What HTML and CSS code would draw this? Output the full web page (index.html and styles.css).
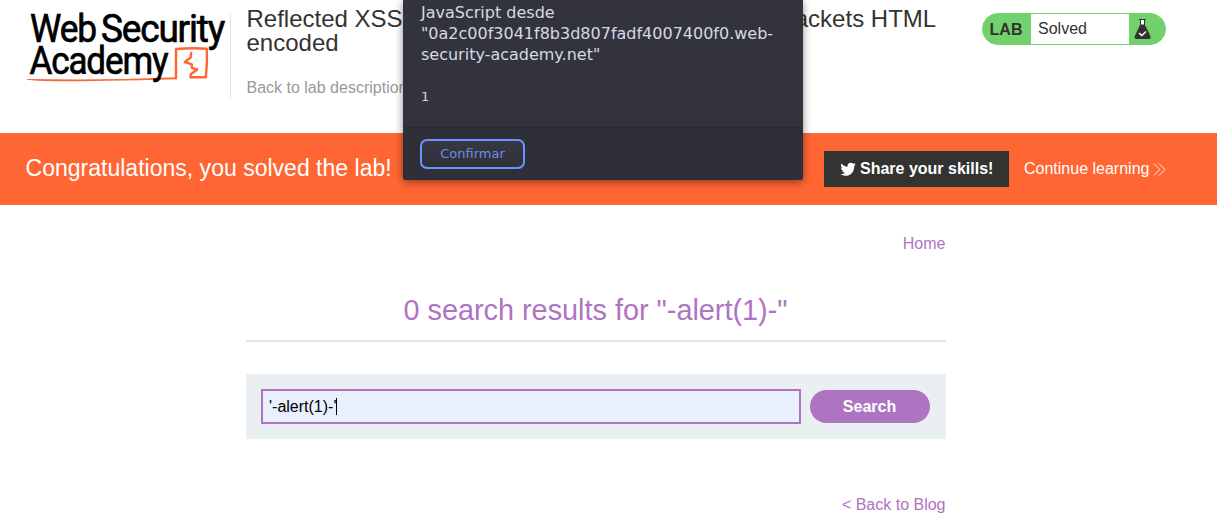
FILE: index.html
```html
<!DOCTYPE html>
<html lang="en">
<head>
<meta charset="utf-8">
<title>Web Security Academy</title>
<link rel="stylesheet" href="styles.css">
</head>
<body>
<header class="header">
  <svg class="logo" width="206" height="90" viewBox="24 0 206 90" role="img" aria-label="Web Security Academy">
    <path class="logo-line" d="M176 78.300V49Q191 47.700 206.800 48.700Q207.500 63 205.800 77.300L190.500 77.300 190.800 74.300 197.300 69.500 191.800 67.800 191.800 64.300 184.800 62 190.500 57.800 191.200 53"/>
    <path fill="#ff6633" d="M26.500 79Q100 80.500 176.500 77.300V79.200Q90 81.500 55 81.300Q35 81 27 79.800Z"/>
    <g class="logo-text">
      <text x="30" y="41.500" textLength="66" lengthAdjust="spacingAndGlyphs">Web</text>
      <text x="101" y="41.500" textLength="123" lengthAdjust="spacingAndGlyphs">Security</text>
      <text x="29.500" y="74" textLength="138" lengthAdjust="spacingAndGlyphs">Academy</text>
    </g>
  </svg>
  <div class="title">
    <h1>Reflected XSS into a JavaScript string with angle brackets HTML encoded</h1>
    <a class="back">Back to lab description</a>
  </div>
  <div class="status">
    <b class="status-label">LAB</b>
    <span class="status-value">Solved</span>
    <span class="status-icon">
      <svg width="18" height="20" viewBox="0 0 18 20"><path fill="#fff" d="M6.500 1h4v5h-4z"/><path fill="#333332" d="M5 0h7v1h-1v5l5.300 10.800Q17 20 15.500 20h-13Q0 20 .7 17.300L6 6V1H5zM7 1v4.500h3V1z"/><path d="M5 14l2.800 2.500 4.200-4" fill="none" stroke="#fff" stroke-width="1.400"/></svg>
    </span>
  </div>
</header>
<section class="banner">
  <p class="congrats">Congratulations, you solved the lab!</p>
  <a class="share"><svg width="16" height="16" viewBox="0 0 24 24"><path fill="#fff" d="M23.500 5a10 10 0 0 1-2.400.900 4.960 4.960 0 0 0 1.700-2.900c-.950.550-1.800 1.050-2.900 1.280a5 5 0 0 0-8.600 4.400C7.690 8.490 4.370 6.630 1.940 3.660c-1.200 2.200-.6 5 1.520 6.580a4.900 4.900 0 0 1-2.030-.620v.060a4.920 4.920 0 0 0 3.950 4.830 5 5 0 0 1-2.210.080 4.940 4.940 0 0 0 4.600 3.220A9.870 9.870 0 0 1 .7 20a13.990 13.990 0 0 0 7.550 2.210c9.050 0 13.200-7.500 13-14.400a9 9 0 0 0 2.250-2.810z"/></svg><span>Share your skills!</span></a>
  <a class="continue"><span>Continue learning</span><svg width="13" height="13" viewBox="0 0 13 13"><path d="M.8 .5l6 6-6 6M6 .5l6 6-6 6" fill="none" stroke="#fff" stroke-width=".9"/></svg></a>
</section>
<main class="content">
  <nav class="nav"><a>Home</a></nav>
  <h2 class="results">0 search results for "-alert(1)-"</h2>
  <form class="search">
    <div class="field"><span>'-alert(1)-'</span><i class="caret"></i></div>
    <button class="search-button" type="button">Search</button>
  </form>
  <a class="blog">&lt; Back to Blog</a>
</main>
<div class="dialog" role="alertdialog">
  <div class="dialog-body">
    <p class="dialog-title">JavaScript desde<br>"0a2c00f3041f8b3d807fadf4007400f0.web-<br>security-academy.net"</p>
    <p class="dialog-message">1</p>
  </div>
  <div class="dialog-actions"><button class="confirm" type="button">Confirmar</button></div>
</div>
</body>
</html>
```
FILE: styles.css
```css
* { box-sizing: border-box; }
body {
  margin: 0;
  height: 522px;
  overflow: hidden;
  background: #fff;
  color: #333332;
  font: 16px/18px "Liberation Sans", Arial, sans-serif;
}
h1, h2, p { margin: 0; font-weight: 400; }
.header {
  display: flex;
  align-items: flex-start;
  height: 133px;
  padding-left: 24px;
}
.logo { flex: none; }
.logo-text { font: 400 38px Roboto, sans-serif; letter-spacing: -1.2px; fill: #000; stroke: #000; stroke-width: .7; }
.logo-line { fill: none; stroke: #ff6633; stroke-width: 2.4; stroke-linejoin: round; stroke-linecap: round; }
.title {
  width: 752px;
  height: 86px;
  margin-top: 13px;
  padding-left: 15.500px;
  border-left: 1px solid #e3e3e3;
}
.title h1 { margin-top: -6px; width: 710px; font-size: 24px; line-height: 24px; }
.back { display: block; margin-top: 24px; color: #999; }
.status {
  display: flex;
  width: 184px;
  height: 32px;
  margin-top: 13px;
  border: 1px solid #72d46e;
  border-radius: 16px;
  background: #72d16c;
  line-height: 30px;
  overflow: hidden;
}
.status-label { width: 48px; padding: 1px 0 0 6.600px; }
.status-value { width: 98px; padding-left: 7px; background: #fff; }
.status-icon { display: flex; padding: 5px 0 0 5px; }
.banner {
  display: flex;
  align-items: center;
  height: 72px;
  padding-left: 25.500px;
  background: #ff6633;
  color: #fff;
}
.congrats { width: 798.500px; font-size: 23.040px; line-height: 26px; padding-bottom: 2px; }
.share {
  display: flex;
  align-items: center;
  gap: 4px;
  width: 185px;
  height: 36px;
  padding-left: 16px;
  background: #333332;
  font-weight: 700;
}
.continue { display: flex; align-items: center; gap: 4px; margin-left: 15px; }
.content { width: 700px; margin-left: 246px; color: #ae74c2; }
.nav { padding: 30px .5px 0 0; text-align: right; }
.results {
  height: 89px;
  padding: 41px 1px 0 0;
  border-bottom: 2px solid #e4e4e4;
  font-size: 28.830px;
  line-height: 32px;
  text-align: center;
}
.search {
  display: flex;
  align-items: center;
  gap: 9px;
  height: 65px;
  margin-top: 32px;
  padding: 0 15px;
  background: #eaeff2;
}
.field {
  display: flex;
  align-items: center;
  width: 540px;
  height: 35px;
  padding-left: 6px;
  border: 2px solid #ae74c2;
  background: #e8effd;
  color: #000;
}
.caret { width: 1px; height: 17px; background: #000; }
.search-button {
  width: 120px;
  height: 33px;
  padding: 0 1px 0 0;
  border: 0;
  border-radius: 17px;
  background: #ae74c2;
  color: #fff;
  font: 700 16px "Liberation Sans", Arial, sans-serif;
}
.blog { display: block; padding: 57px .5px 0 0; text-align: right; }
.dialog {
  position: absolute;
  top: 0;
  left: 403px;
  width: 400px;
  height: 180px;
  border-radius: 0 0 3px 3px;
  background: #33333d;
  color: #d3dae3;
  box-shadow: 0 2px 9px rgba(0, 0, 0, .45);
  font-family: "DejaVu Sans", sans-serif;
  overflow: hidden;
}
.dialog-body { height: 128px; padding: 2px 18px 0; border-bottom: 1px solid #292a32; }
.dialog-title { font-size: 16px; line-height: 21px; white-space: nowrap; }
.dialog-message { margin-top: 23px; font-size: 13px; line-height: 18px; }
.dialog-actions { height: 52px; padding: 11px 17px; background: #2f2f38; }
.confirm {
  width: 105px;
  height: 30px;
  padding: 0 0 2px;
  border: 2px solid #6a94ff;
  border-radius: 7px;
  background: linear-gradient(#383842, #303039);
  color: #6a8ee6;
  font: 13px "DejaVu Sans", sans-serif;
}
```
